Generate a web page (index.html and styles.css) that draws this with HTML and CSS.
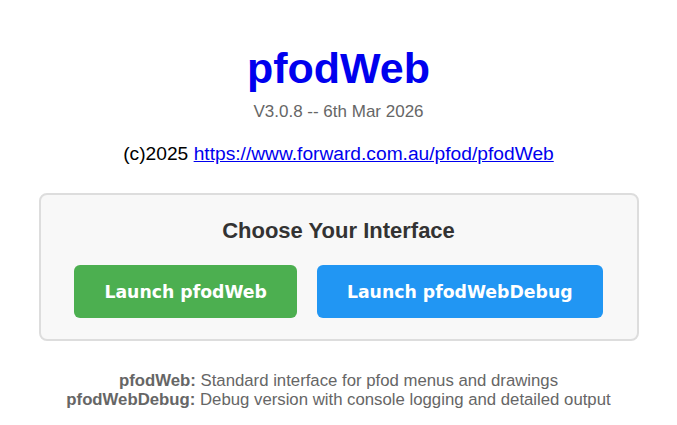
FILE: index.html
```html
<!DOCTYPE html>
<html lang="en">
<head>
    <meta charset="UTF-8">
    <meta name="viewport" content="width=device-width, initial-scale=1.0">
    <title>pfodWeb</title>
    <link rel="stylesheet" href="styles.css">
</head>
<body>
    <div class="container">
        <h1>pfodWeb</h1>
        <div class="version">V3.0.8 -- 6th Mar 2026</div>
        <p class="copyright">(c)2025 <a href="https://www.forward.com.au/pfod/pfodWeb">https://www.forward.com.au/pfod/pfodWeb</a></p>
        <div class="chooser">
            <h2>Choose Your Interface</h2>
            <div class="buttons">
                <button class="launch-btn web-btn">Launch pfodWeb</button>
                <button class="launch-btn debug-btn">Launch pfodWebDebug</button>
            </div>
        </div>
        <div class="notes">
            <p><strong>pfodWeb:</strong> Standard interface for pfod menus and drawings</p>
            <p><strong>pfodWebDebug:</strong> Debug version with console logging and detailed output</p>
        </div>
    </div>
</body>
</html>
```

FILE: styles.css
```css
body {
    font-family: "Liberation Sans", Arial, sans-serif;
    background-color: white;
    margin: 8px;
    color: black;
}
.container {
    text-align: center;
    padding-top: 36px;
}
h1 {
    color: #0000ee;
    font-size: 43px;
    line-height: 48px;
    margin: 0;
}
.version {
    color: #666;
    font-size: 17px;
    margin-top: 10px;
}
.copyright {
    font-size: 19.2px;
    margin: 21px 0 0;
}
.copyright a {
    color: #0000ee;
}
.chooser {
    max-width: 556px;
    margin: 28px auto 0;
    padding: 23px 20px 21px;
    background-color: #f8f8f8;
    border: 2px solid #ddd;
    border-radius: 8px;
}
h2 {
    color: #333;
    font-size: 22px;
    line-height: 26px;
    margin: 0;
}
.buttons {
    display: flex;
    justify-content: center;
    gap: 20px;
    margin-top: 21px;
}
.launch-btn {
    font-family: "DejaVu Sans", Verdana, sans-serif;
    font-weight: bold;
    font-size: 17.3px;
    color: white;
    border: none;
    border-radius: 6px;
    padding: 0 30px;
    height: 53px;
    cursor: pointer;
}
.web-btn {
    background-color: #4CAF50;
}
.debug-btn {
    background-color: #2196F3;
}
.notes {
    color: #666;
    font-size: 16.75px;
    margin-top: 30px;
}
.notes p {
    margin: 0;
    line-height: 19px;
}
```
